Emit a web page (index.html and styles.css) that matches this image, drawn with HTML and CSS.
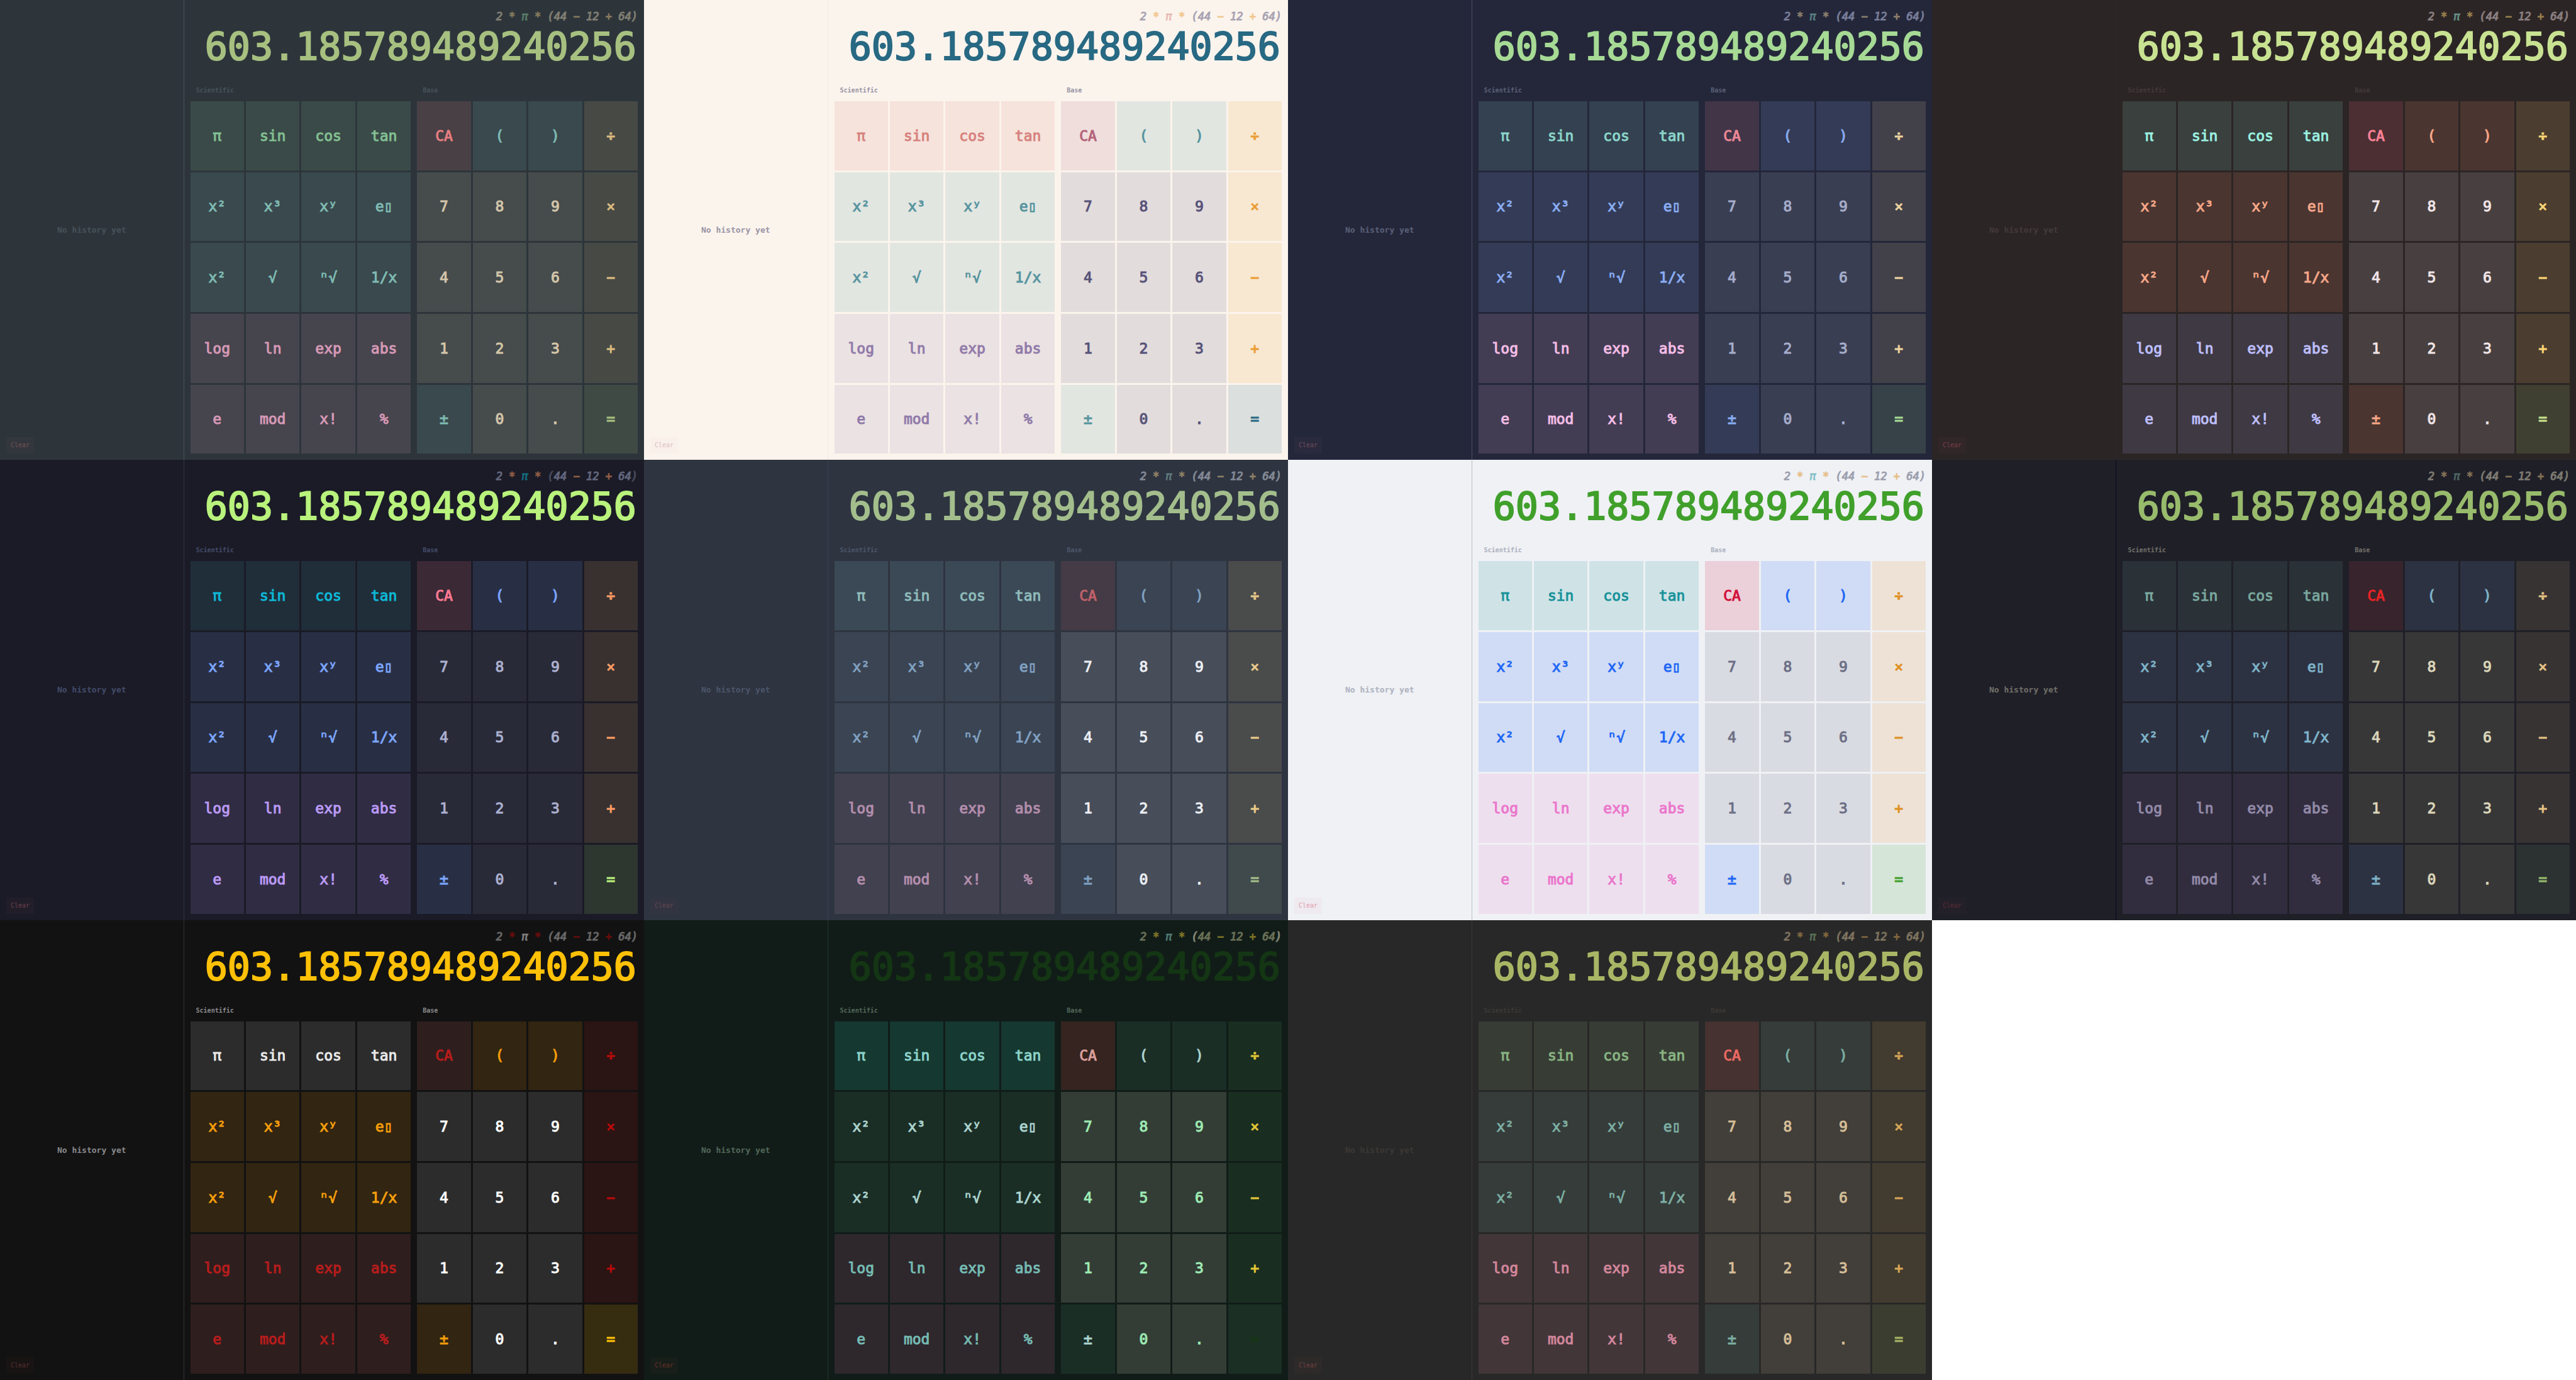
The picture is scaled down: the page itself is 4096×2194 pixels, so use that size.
FILE: index.html
```html
<!DOCTYPE html>
<html lang="en">
<head>
<meta charset="utf-8">
<title>Calculator themes</title>
<link rel="stylesheet" href="styles.css">
</head>
<body>
<main class="gallery" id="gallery"></main>

<template id="calculator">
  <section class="calc">
    <aside class="history">
      <p class="history-empty">No history yet</p>
      <button class="clear" type="button">Clear</button>
    </aside>
    <div class="body">
      <header class="display">
        <p class="expression">2 <span class="op">*</span> <span class="const">π</span> <span class="op">*</span> <span class="paren">(</span>44 <span class="op">−</span> 12 <span class="op">+</span> 64<span class="paren">)</span></p>
        <output class="result">603.185789489240256</output>
      </header>
      <div class="pads">
        <section class="pad">
          <h2 class="pad-title">Scientific</h2>
          <div class="keys">
            <button type="button" class="key cyan">π</button>
            <button type="button" class="key cyan">sin</button>
            <button type="button" class="key cyan">cos</button>
            <button type="button" class="key cyan">tan</button>
            <button type="button" class="key blue">x²</button>
            <button type="button" class="key blue">x³</button>
            <button type="button" class="key blue">xʸ</button>
            <button type="button" class="key blue">e▯</button>
            <button type="button" class="key blue">x²</button>
            <button type="button" class="key blue">√</button>
            <button type="button" class="key blue">ⁿ√</button>
            <button type="button" class="key blue">1/x</button>
            <button type="button" class="key purple">log</button>
            <button type="button" class="key purple">ln</button>
            <button type="button" class="key purple">exp</button>
            <button type="button" class="key purple">abs</button>
            <button type="button" class="key purple">e</button>
            <button type="button" class="key purple">mod</button>
            <button type="button" class="key purple">x!</button>
            <button type="button" class="key purple">%</button>
          </div>
        </section>
        <section class="pad">
          <h2 class="pad-title">Base</h2>
          <div class="keys">
            <button type="button" class="key red">CA</button>
            <button type="button" class="key blue">(</button>
            <button type="button" class="key blue">)</button>
            <button type="button" class="key yellow">÷</button>
            <button type="button" class="key">7</button>
            <button type="button" class="key">8</button>
            <button type="button" class="key">9</button>
            <button type="button" class="key yellow">×</button>
            <button type="button" class="key">4</button>
            <button type="button" class="key">5</button>
            <button type="button" class="key">6</button>
            <button type="button" class="key yellow">−</button>
            <button type="button" class="key">1</button>
            <button type="button" class="key">2</button>
            <button type="button" class="key">3</button>
            <button type="button" class="key yellow">+</button>
            <button type="button" class="key blue">±</button>
            <button type="button" class="key">0</button>
            <button type="button" class="key">.</button>
            <button type="button" class="key green">=</button>
          </div>
        </section>
      </div>
    </div>
  </section>
</template>
<script src="gallery.js"></script>
</body>
</html>
```

FILE: gallery.js
```js
// One calculator per theme, in gallery order.
const themes = [
  'everforest', 'rose-pine', 'macchiato', 'ristretto',
  'tokyo-night', 'nord', 'latte', 'kanagawa',
  'matte-black', 'osaka-jade', 'gruvbox',
];

const gallery = document.getElementById('gallery');
const template = document.getElementById('calculator');

for (const theme of themes) {
  const calc = template.content.cloneNode(true);
  calc.querySelector('.calc').classList.add(theme);
  gallery.append(calc);
}
```

FILE: styles.css
```css
* {
  box-sizing: border-box;
  margin: 0;
}

body {
  background: #ffffff;
  font-family: "DejaVu Sans Mono", monospace;
}

button {
  border: 0;
  padding: 0;
  font-family: inherit;
}

.gallery {
  display: grid;
  grid-template-columns: repeat(4, 1fr);
  grid-template-rows: repeat(3, 1fr);
  height: 100vh;
}

.calc {
  display: grid;
  grid-template-columns: 2fr 5fr;
  min-width: 0;
  background: var(--bg);
}

/* History sidebar */
.history {
  display: grid;
  padding: 10px;
  border-right: 1px solid var(--line);
}

.history-empty {
  grid-area: 1 / 1;
  place-self: center;
  color: var(--muted);
  font-size: 13px;
  font-weight: 700;
}

.clear {
  grid-area: 1 / 1;
  place-self: end start;
  padding: 0 7px;
  background: color-mix(in srgb, var(--red-key) 3%, var(--bg));
  color: color-mix(in srgb, var(--red-key) 38%, var(--bg));
  font-size: 10px;
  line-height: 26px;
}

/* Display */
.body {
  display: flex;
  flex-direction: column;
  min-width: 0;
  padding: 13px 10px 10px;
}

.display {
  padding-bottom: 16px;
  text-align: right;
}

.expression {
  color: var(--fg);
  font-size: 17px;
  font-style: italic;
  line-height: 26px;
  opacity: 0.5;
  -webkit-text-stroke: 1px;
}

.expression .op { color: var(--yellow); }
.expression .const { color: var(--cyan); }
.expression .paren { color: var(--paren, var(--fg)); }

.result {
  display: block;
  padding-right: 2px;
  color: var(--green);
  font-size: 60px;
  line-height: 71px;
  -webkit-text-stroke: 2px;
}

/* Key pads */
.pads {
  display: grid;
  flex: 1;
  grid-template-columns: 1fr 1fr;
  gap: 10px;
}

.pad {
  display: flex;
  flex-direction: column;
}

.pad-title {
  padding-left: 9px;
  color: var(--muted);
  font-size: 10px;
  font-weight: 700;
  line-height: 35px;
}

.keys {
  display: grid;
  flex: 1;
  grid-template-columns: repeat(4, 1fr);
  grid-template-rows: repeat(5, 1fr);
  gap: 3px;
}

.key {
  --ink: var(--num);
  --tint: var(--num-key, var(--num));
  background: color-mix(in srgb, var(--tint) 15%, var(--bg));
  color: var(--ink);
  font-size: 23px;
  -webkit-text-stroke: 1px;
}

.key.red { --ink: var(--red); --tint: var(--red-key); }
.key.green { --ink: var(--green); --tint: var(--green-key, var(--green)); }
.key.yellow { --ink: var(--yellow); --tint: var(--yellow-key, var(--yellow)); }
.key.blue { --ink: var(--blue); --tint: var(--blue-key, var(--blue)); }
.key.purple { --ink: var(--purple); --tint: var(--purple-key, var(--purple)); }
.key.cyan { --ink: var(--cyan); --tint: var(--cyan-key, var(--cyan)); }

/* Themes */
.everforest {
  --bg: #2d353b; --line: #475258; --muted: #475258; --fg: #d3c6aa; --num: #d3c6aa;
  --red: #e67e80; --red-key: #e67e80; --green: #a7c080; --yellow: #dbbc7f;
  --blue: #7fbbb3; --purple: #d699b6; --cyan: #83c092;
}

.rose-pine {
  --bg: #fbf4ed; --line: #f2e9e1; --muted: #9893a5; --fg: #575279; --num: #575279;
  --red: #b4637a; --red-key: #b4637a; --green: #286983; --yellow: #ea9d34;
  --blue: #56949f; --purple: #907aa9; --cyan: #d7827e;
}

.macchiato {
  --bg: #24273a; --line: #494d64; --muted: #5b6078; --fg: #cad3f5;
  --num: #a5adcb; --num-key: #b8c0e0;
  --red: #ed8796; --red-key: #ed8796; --green: #a6da95; --yellow: #eed49f;
  --blue: #8aadf4; --purple: #f5bde6; --cyan: #8bd5ca;
}

.ristretto {
  --bg: #2c2525; --line: #2f2828; --muted: #423a3a; --fg: #e6d9db;
  --num: #f1e5e7; --num-key: #e6d9db;
  --red: #ff8297; --red-key: #fd6883; --green: #c8e292; --green-key: #adda78;
  --yellow: #fcd675; --yellow-key: #f9cc6c; --blue: #f8a788; --blue-key: #f38d70;
  --purple: #bebffd; --purple-key: #a8a9eb; --cyan: #9bf1e1; --cyan-key: #85dacc;
}

.tokyo-night {
  --bg: #1a1b26; --line: #32344a; --muted: #444b6a; --fg: #a9b1d6; --paren: #787c99;
  --num: #acb0d0; --num-key: #787c99;
  --red: #ff7a93; --red-key: #f7768e; --green: #b9f27c; --green-key: #9ece6a;
  --yellow: #ff9e64; --yellow-key: #e0af68; --blue: #7da6ff; --blue-key: #7aa2f7;
  --purple: #bb9af7; --purple-key: #ad8ee6; --cyan: #0db9d7; --cyan-key: #449dab;
}

.nord {
  --bg: #2e3440; --line: #3b4252; --muted: #4c566a; --fg: #d8dee9;
  --num: #eceff4; --num-key: #d8dee9;
  --red: #bf616a; --red-key: #bf616a; --green: #a3be8c; --yellow: #ebcb8b;
  --blue: #81a1c1; --purple: #b48ead; --cyan: #8fbcbb; --cyan-key: #88c0d0;
}

.latte {
  --bg: #eff1f5; --line: #bcc0cc; --muted: #acb0be; --fg: #4c4f69;
  --num: #6c6f85; --num-key: #5c5f77;
  --red: #d20f39; --red-key: #d20f39; --green: #40a02b; --yellow: #df8e1d;
  --blue: #1e66f5; --purple: #ea76cb; --cyan: #179299;
}

.kanagawa {
  --bg: #1f1f28; --line: #090618; --muted: #727169; --fg: #dcd7ba;
  --num: #dcd7ba; --num-key: #c8c093;
  --red: #e82424; --red-key: #c34043; --green: #98bb6c; --green-key: #76946a;
  --yellow: #e6c384; --yellow-key: #c0a36e; --blue: #7fb4ca; --blue-key: #7e9cd8;
  --purple: #938aa9; --purple-key: #957fb8; --cyan: #7aa89f; --cyan-key: #6a9589;
}

.matte-black {
  --bg: #121212; --line: #333333; --muted: #8a8a8d; --fg: #bebebe;
  --num: #ffffff; --num-key: #bebebe;
  --red: #b91c1c; --red-key: #d35f5f; --green: #ffc107;
  --yellow: #b90a0a; --yellow-key: #b91c1c; --blue: #f59e0b; --blue-key: #e68e0d;
  --purple: #b91c1c; --purple-key: #d35f5f; --cyan: #eaeaea; --cyan-key: #bebebe;
}

.osaka-jade {
  --bg: #111c18; --line: #23372b; --muted: #53685b; --fg: #c1c497; --paren: #f6f5dd;
  --num: #9eebb3; --num-key: #f6f5dd;
  --red: #db9f9c; --red-key: #ff5345; --green: #143614; --green-key: #549e6a;
  --yellow: #e5c736; --yellow-key: #459451; --blue: #acd4cf; --blue-key: #509475;
  --purple: #75bbb3; --purple-key: #d2689c; --cyan: #8cd3cb; --cyan-key: #2dd5b7;
}

.gruvbox {
  --bg: #282828; --line: #3c3836; --muted: #3c3836; --fg: #d4be98; --num: #d4be98;
  --red: #ea6962; --red-key: #ea6962; --green: #a9b665; --yellow: #d8a657;
  --blue: #7daea3; --purple: #d3869b; --cyan: #89b482;
}
```
